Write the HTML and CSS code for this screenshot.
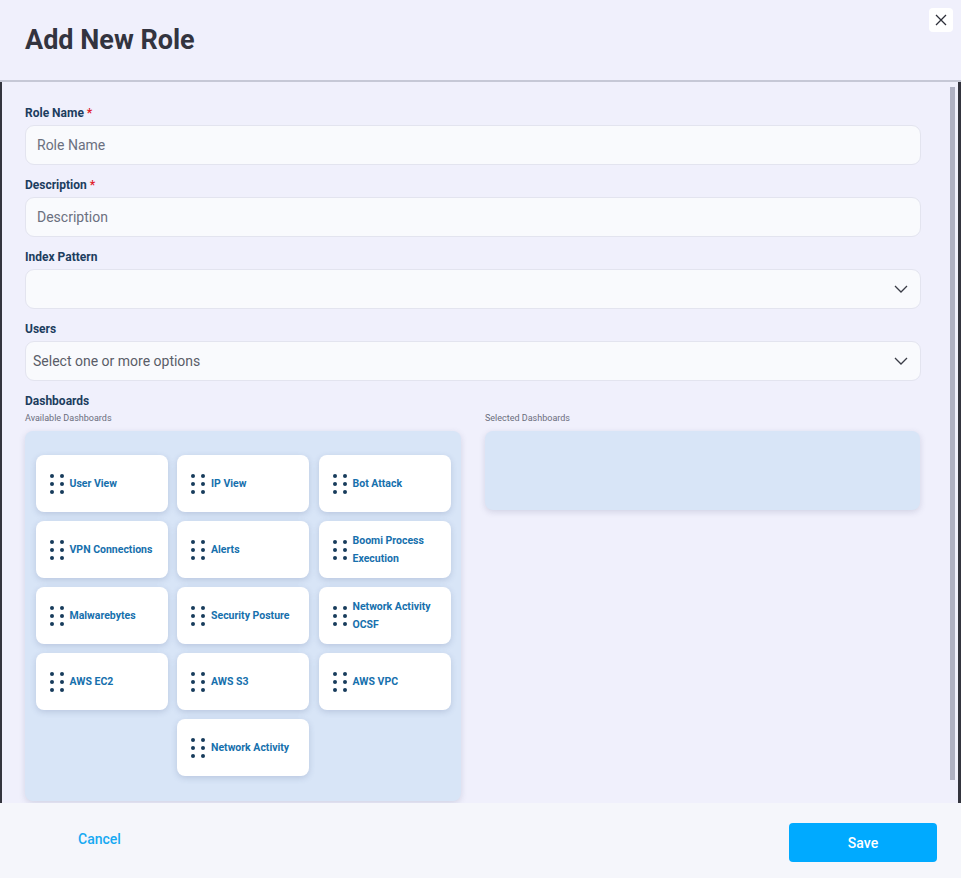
FILE: index.html
```html
<!DOCTYPE html>
<html>
<head>
<meta charset="utf-8">
<link rel="stylesheet" href="styles.css">
</head>
<body>
<div class="modal">
  <header class="modal-head">
    <h1 class="title">Add New Role</h1>
    <button class="close" aria-label="Close">
      <svg width="12" height="12" viewBox="0 0 12 12"><path d="M1 1L11 11M11 1L1 11" stroke="#2d2f3a" stroke-width="1.3" fill="none"/></svg>
    </button>
  </header>
  <div class="body-wrap">
    <main class="modal-body">
      <div class="field">
        <label class="label">Role Name <span class="req">*</span></label>
        <div class="input"><span class="ph">Role Name</span></div>
      </div>
      <div class="field">
        <label class="label">Description <span class="req">*</span></label>
        <div class="input"><span class="ph">Description</span></div>
      </div>
      <div class="field">
        <label class="label">Index Pattern</label>
        <div class="input select"><span class="ph"></span>
          <svg class="chev" width="14" height="8" viewBox="0 0 14 8"><path d="M1 1L7 7L13 1" stroke="#3a3c46" stroke-width="1.3" fill="none"/></svg>
        </div>
      </div>
      <div class="field">
        <label class="label">Users</label>
        <div class="input select"><span class="ph dark">Select one or more options</span>
          <svg class="chev" width="14" height="8" viewBox="0 0 14 8"><path d="M1 1L7 7L13 1" stroke="#3a3c46" stroke-width="1.3" fill="none"/></svg>
        </div>
      </div>
      <div class="label dash-label">Dashboards</div>
      <div class="dash-cols">
        <div class="dash-col">
          <div class="sub">Available Dashboards</div>
          <div class="panel avail">
            <div class="card"><span class="grip"><i></i><i></i><i></i><i></i><i></i><i></i></span><span class="ct">User View</span></div>
            <div class="card"><span class="grip"><i></i><i></i><i></i><i></i><i></i><i></i></span><span class="ct">IP View</span></div>
            <div class="card"><span class="grip"><i></i><i></i><i></i><i></i><i></i><i></i></span><span class="ct">Bot Attack</span></div>
            <div class="card"><span class="grip"><i></i><i></i><i></i><i></i><i></i><i></i></span><span class="ct">VPN Connections</span></div>
            <div class="card"><span class="grip"><i></i><i></i><i></i><i></i><i></i><i></i></span><span class="ct">Alerts</span></div>
            <div class="card"><span class="grip"><i></i><i></i><i></i><i></i><i></i><i></i></span><span class="ct">Boomi Process Execution</span></div>
            <div class="card"><span class="grip"><i></i><i></i><i></i><i></i><i></i><i></i></span><span class="ct">Malwarebytes</span></div>
            <div class="card"><span class="grip"><i></i><i></i><i></i><i></i><i></i><i></i></span><span class="ct">Security Posture</span></div>
            <div class="card"><span class="grip"><i></i><i></i><i></i><i></i><i></i><i></i></span><span class="ct">Network Activity OCSF</span></div>
            <div class="card"><span class="grip"><i></i><i></i><i></i><i></i><i></i><i></i></span><span class="ct">AWS EC2</span></div>
            <div class="card"><span class="grip"><i></i><i></i><i></i><i></i><i></i><i></i></span><span class="ct">AWS S3</span></div>
            <div class="card"><span class="grip"><i></i><i></i><i></i><i></i><i></i><i></i></span><span class="ct">AWS VPC</span></div>
            <div class="card"><span class="grip"><i></i><i></i><i></i><i></i><i></i><i></i></span><span class="ct">Network Activity</span></div>
          </div>
        </div>
        <div class="dash-col">
          <div class="sub">Selected Dashboards</div>
          <div class="panel selected"></div>
        </div>
      </div>
    </main>
    <div class="scroll-thumb"></div>
  </div>
  <footer class="modal-foot">
    <button class="cancel">Cancel</button>
    <button class="save">Save</button>
  </footer>
</div>
</body>
</html>
```
FILE: styles.css
```css
* { box-sizing: border-box; }
html, body { margin: 0; padding: 0; }
body {
  font-family: Roboto, "Liberation Sans", sans-serif;
  background: #f0f0fc;
  width: 961px;
  height: 878px;
  overflow: hidden;
}
.modal {
  display: flex;
  flex-direction: column;
  height: 878px;
}
.modal-head {
  height: 82px;
  flex: none;
  background: #f0f0fc;
  border-bottom: 2px solid #c6c8d6;
  display: flex;
  align-items: flex-start;
  justify-content: space-between;
  padding: 0 8px 0 25px;
}
.title {
  margin: 24px 0 0;
  font-size: 27px;
  line-height: 32px;
  font-weight: 700;
  color: #33343f;
}
.close {
  margin-top: 8px;
  width: 24px;
  height: 24px;
  border: none;
  border-radius: 4px;
  background: #ffffff;
  display: flex;
  align-items: center;
  justify-content: center;
  padding: 0;
}
.body-wrap {
  flex: 1;
  min-height: 0;
  position: relative;
  border-left: 2px solid #34353f;
  border-right: 3px solid #34353f;
  background: #f0f0fc;
}
.modal-body {
  height: 100%;
  overflow: hidden;
  padding: 23px 37px 34px 23px;
}
.scroll-thumb {
  position: absolute;
  top: 5px;
  right: 3px;
  width: 5px;
  height: 693px;
  background: #afb1c3;
}
.field { margin-bottom: 12px; }
.label {
  display: block;
  font-size: 12px;
  line-height: 16px;
  font-weight: 700;
  color: #1c3d5e;
  margin-bottom: 4px;
}
.req { color: #e0202a; }
.input {
  height: 40px;
  background: #f9fafd;
  border: 1px solid #e3e4ef;
  border-radius: 9px;
  display: flex;
  align-items: center;
  justify-content: space-between;
  padding: 0 12px 0 11px;
}
.input.select { padding-left: 7px; }
.ph { font-size: 14px; color: #6b7080; }
.ph.dark { color: #5a5d68; }
.dash-label { margin-bottom: 3px; }
.dash-cols {
  display: grid;
  grid-template-columns: 436px 435px;
  column-gap: 24px;
}
.sub {
  font-size: 9px;
  line-height: 12px;
  color: #6b6e7c;
  margin-bottom: 7px;
}
.panel {
  background: #d8e5f7;
  border-radius: 8px;
  box-shadow: 0 2px 6px rgba(70, 80, 120, 0.18);
}
.avail {
  padding: 24px 10px 25px;
  display: flex;
  flex-wrap: wrap;
  justify-content: center;
  gap: 9px 9.5px;
}
.selected { height: 79px; }
.card {
  width: 132px;
  height: 57px;
  background: #ffffff;
  border-radius: 8px;
  box-shadow: 0 2px 6px rgba(60, 80, 130, 0.2);
  display: flex;
  align-items: center;
  padding: 0 6px 0 14px;
}
.grip {
  display: grid;
  grid-template-columns: 4px 4px;
  column-gap: 6px;
  row-gap: 4px;
  flex: none;
  margin-right: 6px;
}
.grip i {
  display: block;
  width: 4px;
  height: 4px;
  border-radius: 50%;
  background: #173b5c;
}
.ct {
  font-size: 10.5px;
  line-height: 18px;
  font-weight: 700;
  color: #1670ad;
}
.modal-foot {
  height: 75px;
  flex: none;
  background: #f5f6fb;
  display: flex;
  align-items: center;
  justify-content: space-between;
  padding: 0 24px 0 78px;
}
.cancel {
  border: none;
  background: none;
  padding: 0;
  font-family: Roboto, "Liberation Sans", sans-serif;
  font-size: 14px;
  font-weight: 500;
  color: #17a9f2;
  margin-top: -4px;
}
.save {
  width: 148px;
  height: 39px;
  border: none;
  border-radius: 4px;
  background: #00aaff;
  color: #ffffff;
  font-family: Roboto, "Liberation Sans", sans-serif;
  font-size: 14px;
  font-weight: 500;
  margin-top: 4px;
}
```
